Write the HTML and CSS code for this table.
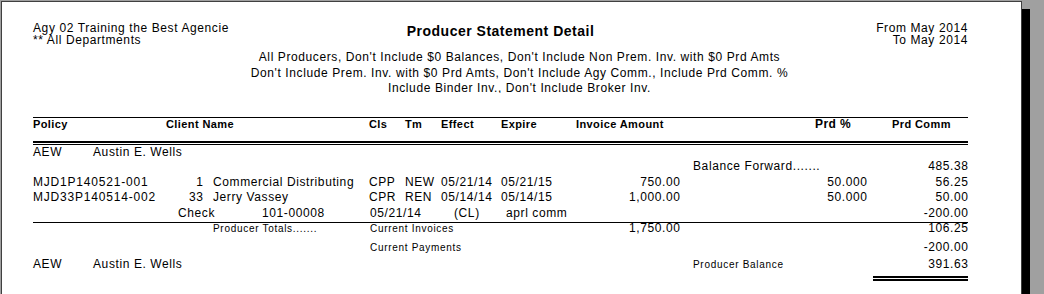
FILE: index.html
```html
<!DOCTYPE html>
<html lang="en">
<head>
<meta charset="utf-8">
<title>Producer Statement Detail</title>
<link rel="stylesheet" href="styles.css">
</head>
<body>
<div class="paper">
  <div class="report">
    <header class="rpt-head">
      <div class="head-left">
        <div>Agy 02 Training the Best Agencie</div>
        <div>** All Departments</div>
      </div>
      <div class="head-title">Producer Statement Detail</div>
      <div class="head-right">
        <div>From May 2014</div>
        <div>To May 2014</div>
      </div>
    </header>
    <div class="criteria">
      <div>All Producers, Don't Include $0 Balances, Don't Include Non Prem. Inv. with $0 Prd Amts</div>
      <div>Don't Include Prem. Inv. with $0 Prd Amts, Don't Include Agy Comm., Include Prd Comm. %</div>
      <div>Include Binder Inv., Don't Include Broker Inv.</div>
    </div>

    <div class="rule-top"></div>
    <div class="row cols-head">
      <span>Policy</span>
      <span>Client Name</span>
      <span>Cls</span>
      <span>Tm</span>
      <span>Effect</span>
      <span>Expire</span>
      <span>Invoice Amount</span>
      <span class="big">Prd %</span>
      <span>Prd Comm</span>
    </div>
    <div class="rule-double"></div>

    <div class="row cols-name first">
      <span>AEW</span>
      <span>Austin E. Wells</span>
    </div>
    <div class="row cols-bf">
      <span></span>
      <span>Balance Forward.......</span>
      <span class="num">485.38</span>
    </div>
    <div class="row cols-tx">
      <span class="pol">MJD1P140521-001</span>
      <span class="num">1</span>
      <span class="client">Commercial Distributing</span>
      <span>CPP</span>
      <span>NEW</span>
      <span>05/21/14</span>
      <span>05/21/15</span>
      <span class="num">750.00</span>
      <span class="num">50.000</span>
      <span class="num">56.25</span>
    </div>
    <div class="row cols-tx">
      <span class="pol">MJD33P140514-002</span>
      <span class="num">33</span>
      <span class="client">Jerry Vassey</span>
      <span>CPR</span>
      <span>REN</span>
      <span>05/14/14</span>
      <span>05/14/15</span>
      <span class="num">1,000.00</span>
      <span class="num">50.000</span>
      <span class="num">50.00</span>
    </div>
    <div class="row cols-chk">
      <span></span>
      <span>Check</span>
      <span>101-00008</span>
      <span>05/21/14</span>
      <span>(CL)</span>
      <span>aprl comm</span>
      <span class="num">-200.00</span>
    </div>
    <div class="rule-single"></div>

    <div class="row cols-tot">
      <span></span>
      <span class="small">Producer Totals.......</span>
      <span class="small">Current Invoices</span>
      <span class="num">1,750.00</span>
      <span class="num">106.25</span>
    </div>
    <div class="row cols-pay">
      <span></span>
      <span class="small">Current Payments</span>
      <span class="num">-200.00</span>
    </div>
    <div class="row cols-fin">
      <span>AEW</span>
      <span>Austin E. Wells</span>
      <span class="small">Producer Balance</span>
      <span class="num">391.63</span>
    </div>
    <div class="rule-total"></div>
  </div>
</div>
</body>
</html>
```

FILE: styles.css
```css
html, body {
  margin: 0;
  padding: 0;
  overflow: hidden;
  height: 100%;
}

body {
  background: #a0a0a0;
  padding: 1px 0 0 1px;
  box-sizing: border-box;
  font-family: "Liberation Sans", Arial, sans-serif;
  font-size: 12px;
  letter-spacing: 0.6px;
  color: #000;
}

.paper {
  width: 1021px;
  height: 420px;
  box-sizing: border-box;
  background: #fff;
  border: 1px solid #404040;
  box-shadow: 8px 8px 0 #000;
}

.report {
  width: 935px;
  padding: 20px 0 0 31px;
}

.rpt-head {
  display: grid;
  grid-template-columns: 1fr auto 1fr;
  line-height: 12px;
}

.head-title {
  font-size: 14px;
  font-weight: bold;
  letter-spacing: 0.5px;
  line-height: 14px;
  margin-top: 1.5px;
}

.head-right {
  text-align: right;
}

.criteria {
  margin-top: 4px;
  padding-left: 38px;
  height: 43px;
  overflow: hidden;
  text-align: center;
  line-height: 15.5px;
  white-space: nowrap;
}

.rule-top {
  margin-top: 24px;
  border-top: 1px solid #000;
}

.rule-double {
  margin-top: 10px;
  height: 1px;
  border-top: 2px solid #000;
  border-bottom: 1px solid #000;
}

.rule-single {
  margin-top: 1px;
  border-top: 1px solid #000;
}

.rule-total {
  margin: 3.5px 0 0 840px;
  width: 95px;
  height: 1px;
  border-top: 2px solid #000;
  border-bottom: 2px solid #000;
}

.row {
  display: grid;
  align-items: baseline;
  line-height: 15.5px;
  white-space: nowrap;
}

.num {
  text-align: right;
  margin-right: -0.6px;
}

.small {
  font-size: 10px;
  letter-spacing: 0.7px;
}

.cols-head {
  grid-template-columns: 133px 203px 36px 36px 60px 75px 239px 77px 76px;
  font-size: 11px;
  font-weight: bold;
  letter-spacing: 0.4px;
  line-height: 13px;
}

.cols-head .big {
  font-size: 12px;
}

.cols-name {
  grid-template-columns: 60px 1fr;
}

.cols-name.first {
  line-height: 14px;
}

.cols-bf {
  grid-template-columns: 660px 174px 101px;
}

.cols-tx {
  grid-template-columns: 127px 43px 166px 36px 36px 60px 79px 100px 187px 101px;
}

.cols-tx .pol {
  letter-spacing: 0.8px;
}

.cols-tx .client {
  padding-left: 10px;
}

.cols-chk {
  grid-template-columns: 145px 84px 108px 84px 52px 361px 101px;
}

.cols-tot {
  grid-template-columns: 180px 157px 210px 100px 288px;
  line-height: 10px;
}

.cols-pay {
  grid-template-columns: 337px 497px 101px;
  margin-top: 6px;
}

.cols-fin {
  grid-template-columns: 60px 600px 174px 101px;
  margin-top: 1.5px;
}
```
